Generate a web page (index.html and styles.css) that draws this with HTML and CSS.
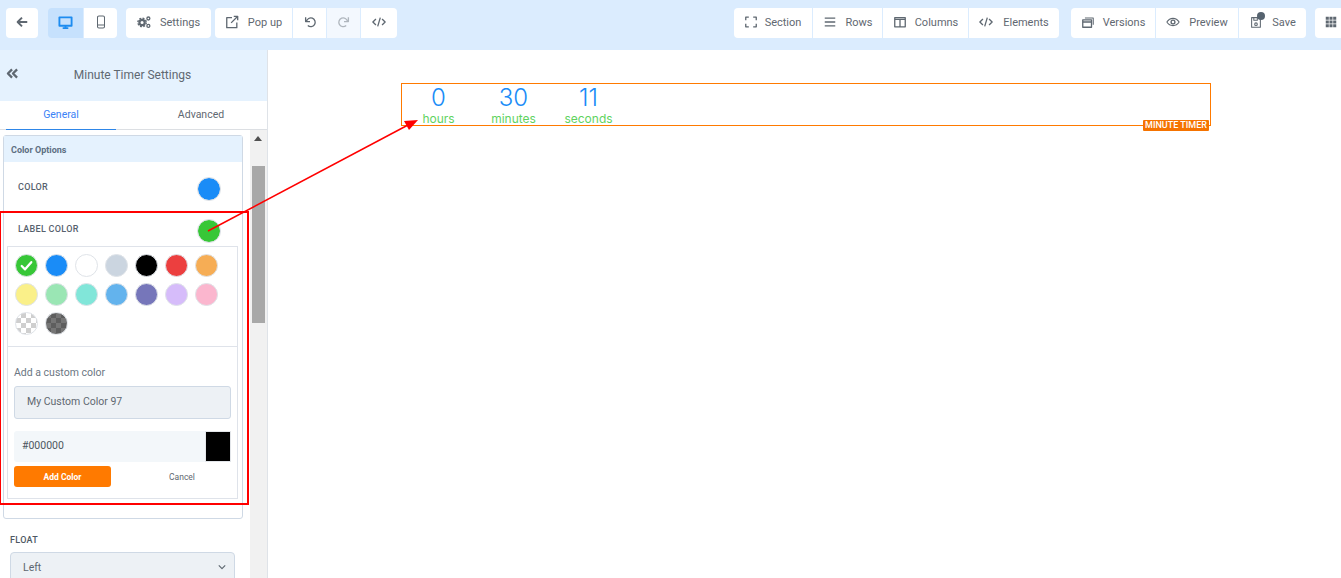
FILE: index.html
```html
<!DOCTYPE html>
<html lang="en">
<head>
<meta charset="utf-8">
<title>Minute Timer Settings</title>
<link rel="stylesheet" href="styles.css">
</head>
<body>
<header class="topbar">
  <div class="tools">
    <div class="group g-back"><button class="btn w-back"><svg class="ic" viewBox="0 0 16 16"><path d="M14 8H3M8 3L3 8l5 5" class="s2"/></svg></button></div>
    <div class="group">
      <button class="btn w-dev active"><svg class="ic ic-l" viewBox="0 0 16 16"><path d="M1.500 2.500h13v9h-13z" class="sb"/><path d="M5 14h6M8 11.500V14" class="sb"/></svg></button>
      <button class="btn w-dev2"><svg class="ic" viewBox="0 0 16 16"><rect x="4" y="1.200" width="8" height="13.600" rx="1.600" class="s1"/><path d="M4 11.500h8" class="s1"/></svg></button>
    </div>
    <div class="group g-settings"><button class="btn w-settings"><svg class="ic" viewBox="0 0 16 16"><circle cx="5.800" cy="8.500" r="3" class="s25"/><circle cx="5.800" cy="8.500" r="4.800" class="teeth"/><circle cx="13" cy="4" r="1.700" class="s15"/><circle cx="13" cy="12.500" r="1.700" class="s15"/></svg><span>Settings</span></button></div>
    <div class="group">
      <button class="btn w-popup"><svg class="ic" viewBox="0 0 16 16"><path d="M8 3H2v11.500h11.500V8.500" class="s15"/><path d="M7 9l7-7M10 1.500h4.500V6" class="s15"/></svg><span>Pop up</span></button>
      <button class="btn w-undo"><svg class="ic" viewBox="0 0 16 16"><path d="M4 7.500a5 5 0 1 1 1.500 4.500M3 2.500v5h5" class="s15"/></svg></button>
      <button class="btn w-redo dim"><svg class="ic" viewBox="0 0 16 16"><path d="M12 7.500a5 5 0 1 0-1.500 4.500M13 2.500v5H8" class="s15"/></svg></button>
      <button class="btn w-code"><svg class="ic" viewBox="0 0 16 16"><path d="M4.500 4.500L1 8l3.500 3.500M11.500 4.500L15 8l-3.500 3.500M9.500 3l-3 10" class="s15"/></svg></button>
    </div>
  </div>
  <div class="tools">
    <div class="group">
      <button class="btn w-section"><svg class="ic" viewBox="0 0 16 16"><path d="M2 6V2.500h3.500M10.500 2.500H14V6M14 10v3.500h-3.500M5.500 13.500H2V10" class="s15"/></svg><span>Section</span></button>
      <button class="btn w-rows"><svg class="ic" viewBox="0 0 16 16"><path d="M2 3.500h12M2 8h12M2 12.500h12" class="s15"/></svg><span>Rows</span></button>
      <button class="btn w-cols"><svg class="ic" viewBox="0 0 16 16"><path d="M2 3h12v10.500H2zM8 5v8.500M2 5h12" class="s15"/></svg><span>Columns</span></button>
      <button class="btn w-elem"><svg class="ic" viewBox="0 0 16 16"><path d="M4.500 4.500L1 8l3.500 3.500M11.500 4.500L15 8l-3.500 3.500M9.500 3l-3 10" class="s15"/></svg><span>Elements</span></button>
    </div>
    <div class="group">
      <button class="btn w-vers"><svg class="ic" viewBox="0 0 16 16"><path d="M2 5.500h10v8.500H2zM2 8h10" class="s15"/><path d="M4.500 3.500h9.500V11" class="s1"/></svg><span>Versions</span></button>
      <button class="btn w-prev"><svg class="ic" viewBox="0 0 16 16"><path d="M1 8c3.500-5.500 10.500-5.500 14 0-3.500 5.500-10.500 5.500-14 0z" class="s1"/><circle cx="8" cy="8" r="2.200" class="s15"/></svg><span>Preview</span></button>
      <button class="btn w-save"><svg class="ic" viewBox="0 0 16 16"><path d="M3 3h10v11H3zM5.500 3v3h4V3" class="s1"/><circle cx="8" cy="10.500" r="1.500" class="s1"/></svg><span>Save</span><i class="dot"></i></button>
    </div>
    <div class="group group-end"><button class="btn w-grid"><svg class="ic" viewBox="0 0 16 16"><path d="M2 2h3.500v3.500H2zM6.250 2h3.500v3.500h-3.500zM10.500 2H14v3.500h-3.500zM2 6.250h3.500v3.500H2zM6.250 6.250h3.500v3.500h-3.500zM10.500 6.250H14v3.500h-3.500zM2 10.500h3.500V14H2zM6.250 10.500h3.500V14h-3.500zM10.500 10.500H14V14h-3.500z" class="f"/></svg></button></div>
  </div>
</header>

<div class="workspace">
  <aside class="sidebar">
    <div class="side-head">
      <svg class="collapse" viewBox="0 0 14 12"><path d="M6.500 1.500L2 6l4.500 4.500M12 1.500L7.500 6l4.500 4.500" class="s25"/></svg>
      <h1>Minute Timer Settings</h1>
    </div>
    <div class="tabs"><div class="tab on">General</div><div class="tab">Advanced</div></div>
    <div class="side-body">
      <div class="side-content">
        <section class="panel">
          <div class="panel-head">Color Options</div>
          <div class="color-row"><span class="lbl">COLOR</span><i class="big blue"></i></div>
          <div class="color-row"><span class="lbl">LABEL COLOR</span><i class="big green"></i></div>
          <div class="picker">
            <div class="swatches">
              <i class="sw" style="background:#37c737"><svg viewBox="0 0 22 22"><path d="M6 11.500l3.500 3.500L16 7.500" class="chk"/></svg></i>
              <i class="sw" style="background:#1a8cf7"></i>
              <i class="sw" style="background:#fff"></i>
              <i class="sw" style="background:#cbd5e0"></i>
              <i class="sw" style="background:#000"></i>
              <i class="sw" style="background:#ec3f3f"></i>
              <i class="sw" style="background:#f6ad55"></i>
              <i class="sw" style="background:#faf089"></i>
              <i class="sw" style="background:#9ae6b4"></i>
              <i class="sw" style="background:#81e6d9"></i>
              <i class="sw" style="background:#63b3ed"></i>
              <i class="sw" style="background:#7676ba"></i>
              <i class="sw" style="background:#d6bcfa"></i>
              <i class="sw" style="background:#fbb6ce"></i>
              <i class="sw check-light"></i>
              <i class="sw check-dark"></i>
            </div>
            <div class="custom">
              <div class="custom-title">Add a custom color</div>
              <div class="name-input">My Custom Color 97</div>
              <div class="hex"><span>#000000</span><i class="hex-sw"></i></div>
              <div class="actions"><button class="add">Add Color</button><button class="cancel">Cancel</button></div>
            </div>
          </div>
        </section>
        <div class="float-lbl">FLOAT</div>
        <div class="select"><span>Left</span><svg viewBox="0 0 10 6"><path d="M1 1l4 4 4-4" class="s15"/></svg></div>
      </div>
      <div class="scrollbar"><i class="arrow"></i><i class="thumb"></i></div>
    </div>
  </aside>
  <main class="canvas">
    <div class="timer">
      <div class="unit"><b>0</b><span>hours</span></div>
      <div class="unit"><b>30</b><span>minutes</span></div>
      <div class="unit"><b>11</b><span>seconds</span></div>
      <div class="badge">MINUTE TIMER</div>
    </div>
  </main>
</div>

<svg class="annotation" viewBox="0 0 1341 578">
  <rect x="0" y="212" width="248" height="292" class="red-box"/>
  <path d="M208 231L408 125" class="red"/>
  <path d="M418 120L404 121L409 130z" class="redf"/>
</svg>
</body>
</html>
```
FILE: styles.css
```css
* { box-sizing: border-box; }
html, body { margin: 0; height: 100%; }
body { width: 1341px; height: 578px; overflow: hidden; position: relative; font-family: Roboto, "Liberation Sans", sans-serif; color: #5d6670; background: #fff; }
button { font: inherit; color: inherit; border: 0; padding: 0; background: none; }

.topbar { height: 50px; background: #dbecfe; display: flex; justify-content: space-between; padding: 8px 0 0 6px; overflow: hidden; }
.tools { display: flex; gap: 9px; }
.tools + .tools { gap: 12px; margin-right: -30px; }
.group { display: flex; gap: 1px; height: 30px; border-radius: 4px; overflow: hidden; }
.g-back { margin-right: 1px; }
.g-settings { margin-right: -5px; }
.group-end { gap: 0; margin-left: -3px; }
.btn { height: 30px; background: #fff; display: flex; align-items: center; justify-content: center; gap: 9px; font-size: 11px; color: #5f6871; white-space: nowrap; padding-bottom: 2px; }
.btn.active { background: #c6e1fd; }
.btn.dim { background: #f3f8fe; }
.btn.dim svg { opacity: .45; }
.ic { width: 14px; height: 14px; flex: none; }
.ic-l { width: 15px; height: 15px; }
.w-back { width: 32px; }
.w-dev { width: 35px; }
.w-dev2 { width: 33px; }
.w-settings { width: 85px; }
.w-popup { width: 77px; }
.w-undo { width: 33px; }
.w-redo { width: 33px; }
.w-code { width: 36px; }
.w-section { width: 78px; gap: 7px; padding-right: 1px; }
.w-rows { width: 69px; }
.w-cols { width: 85px; gap: 8px; }
.w-elem { width: 90px; gap: 10px; }
.w-vers { width: 84px; gap: 8px; }
.w-prev { width: 82px; }
.w-save { width: 67px; position: relative; }
.w-grid { width: 56px; justify-content: flex-start; padding-left: 9px; }
.dot { position: absolute; width: 8px; height: 8px; border-radius: 50%; background: #56636f; left: 18px; top: 4px; }

.s1, .s15, .s2, .s25, .sb, .chk, .teeth { fill: none; stroke-linejoin: round; }
.s1 { stroke: #5f6871; stroke-width: 1.200; }
.s15 { stroke: #5f6871; stroke-width: 1.500; }
.s2 { stroke: #5f6871; stroke-width: 2.200; }
.s25 { stroke: #5f6871; stroke-width: 2.500; }
.teeth { stroke: #5f6871; stroke-width: 1.600; stroke-dasharray: 2.200 1.570; }
.sb { stroke: #1d8cf0; stroke-width: 2; }
.f { fill: #5f6871; }
.chk { stroke: #fff; stroke-width: 2.400; stroke-linecap: round; }

.workspace { display: flex; height: 528px; }
.sidebar { width: 268px; flex: none; border-right: 1px solid #dfe3e8; display: flex; flex-direction: column; }
.side-head { height: 51px; background: #e5f2fe; display: flex; align-items: center; justify-content: center; position: relative; padding: 0 2px 2px 0; }
.side-head h1 { margin: 0; font-size: 12px; font-weight: 400; color: #5f6871; }
.collapse { position: absolute; left: 6px; top: 18px; width: 13px; height: 11px; }
.tabs { display: flex; height: 29px; padding-left: 6px; border-bottom: 1px solid #dcdfe3; flex: none; }
.tab { font-size: 10.500px; width: 110px; text-align: center; padding-top: 7px; height: 29px; color: #5f6871; }
.tab + .tab { width: 151px; padding-left: 19px; }
.tab.on { color: #3b82f6; border-bottom: 1px solid #2e86e8; }

.side-body { display: flex; flex: 1; min-height: 0; overflow: hidden; }
.side-content { width: 250px; flex: none; padding: 5px 0 0 3px; }
.panel { width: 240px; height: 384px; border: 1px solid #cfd9e5; border-radius: 3px; }
.panel-head { height: 26px; background: #e5f2fe; font-size: 9px; font-weight: 700; color: #5d6f82; padding: 9px 0 0 7px; line-height: 10px; }
.color-row { height: 42px; display: flex; justify-content: space-between; padding: 16px 21px 0 14px; }
.lbl { font-size: 9px; font-weight: 500; color: #56616d; letter-spacing: .3px; line-height: 18px; height: 18px; }
.big { width: 24px; height: 24px; border-radius: 50%; border: 1px solid #d9dee4; background-clip: padding-box; margin-top: -1px; }
.blue { background-color: #1a8cf7; }
.green { background-color: #37c737; }

.picker { width: 231px; height: 253px; margin: 0 0 0 3px; border: 1px solid #dfe3ea; display: flex; flex-direction: column; }
.swatches { height: 100px; flex: none; padding: 7px 0 0 7px; display: grid; grid-template-columns: repeat(7, 22px); grid-auto-rows: 22px; column-gap: 8px; row-gap: 7px; align-content: start; border-bottom: 1px solid #dfe3ea; }
.sw { width: 23px; height: 23px; border-radius: 50%; border: 1px solid #dfe3e8; display: block; }
.sw svg { display: block; width: 21px; height: 21px; }
.check-light { background: repeating-conic-gradient(#cfcfcf 0 25%, #fff 0 50%) 0 0 / 10px 10px; }
.check-dark { background: repeating-conic-gradient(#5e5e5e 0 25%, #767676 0 50%) 0 0 / 10px 10px; }
.custom { padding: 19px 6px 0 6px; }
.custom-title { font-size: 10.500px; line-height: 13px; color: #6b7682; }
.name-input { height: 33px; margin-top: 7px; background: #edf1f5; border: 1px solid #cfd9e5; border-radius: 3px; font-size: 10.500px; line-height: 30px; padding-left: 12px; color: #5f6871; }
.hex { height: 31px; margin-top: 12px; background: #f3f7fa; font-size: 10.500px; line-height: 29px; padding-left: 8px; display: flex; justify-content: space-between; border-radius: 3px 0 0 3px; color: #4d5660; }
.hex-sw { width: 26px; height: 31px; background: #000; border: 1px solid #e3e6ea; }
.actions { display: flex; margin-top: 4px; align-items: center; }
.add { flex: none; width: 97px; height: 21px; background: #ff7a00; color: #fff; border-radius: 3px; font-size: 8.500px; font-weight: 700; }
.cancel { flex: none; width: 142px; font-size: 8.500px; color: #5f6871; }
.float-lbl { font-size: 9px; font-weight: 500; color: #4e5863; margin: 16px 0 0 7px; line-height: 11px; letter-spacing: .3px; }
.select { width: 225px; height: 34px; margin: 6px 0 0 7px; background: #edf1f5; border: 1px solid #cfd9e5; border-radius: 4px; font-size: 10.500px; padding: 0 8px 4px 12px; display: flex; justify-content: space-between; align-items: center; }
.select svg { width: 8px; height: 6px; }

.scrollbar { width: 17px; background: #f1f1f1; position: relative; }
.arrow { position: absolute; left: 4px; top: 6px; border: 4px solid transparent; border-top: 0; border-bottom: 5px solid #505050; }
.thumb { position: absolute; left: 2px; top: 36px; width: 13px; height: 157px; background: #a8a8a8; }

.canvas { flex: 1; padding: 33px 0 0 133px; background: #fff; }
.timer { width: 810px; height: 43px; border: 1px solid #ff7a00; position: relative; display: flex; font-family: Inter, "Open Sans", sans-serif; }
.unit { width: 75px; display: flex; flex-direction: column; align-items: center; }
.unit:first-child { margin-left: -1px; }
.unit b { font-size: 24px; font-weight: 300; line-height: 27px; color: #1a8cf7; }
.unit span { font-size: 12px; line-height: 15px; font-weight: 400; color: #5fd35f; }
.badge { position: absolute; right: 1px; top: 36px; width: 66px; height: 11px; background: #f57300; color: #fff; font-family: Roboto, sans-serif; font-size: 9px; font-weight: 500; line-height: 11px; text-align: center; border-radius: 1px; white-space: nowrap; }

.annotation { position: absolute; left: 0; top: 0; width: 1341px; height: 578px; pointer-events: none; }
.red { fill: none; stroke: #f00; stroke-width: 1.500; }
.red-box { fill: none; stroke: #f00; stroke-width: 2; }
.redf { fill: #f00; }
```
